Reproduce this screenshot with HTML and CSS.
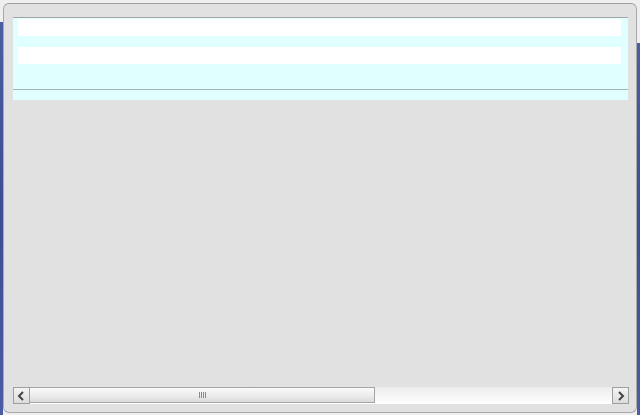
FILE: index.html
```html
<!DOCTYPE html>
<html>
<head>
<meta charset="utf-8">
<link rel="stylesheet" href="styles.css">
</head>
<body>
<div class="window">
  <div class="panel">
    <div class="field"></div>
    <div class="field field-second"></div>
    <div class="rule"></div>
  </div>
  <div class="body-space"></div>
  <div class="hscroll">
    <div class="sb-btn">
      <svg width="9" height="10" viewBox="0 0 9 10"><path d="M6 1 L2 5 L6 9" fill="none" stroke="#444" stroke-width="2"/></svg>
    </div>
    <div class="sb-track">
      <div class="sb-thumb">
        <span class="grip"></span>
      </div>
    </div>
    <div class="sb-btn">
      <svg width="9" height="10" viewBox="0 0 9 10"><path d="M3 1 L7 5 L3 9" fill="none" stroke="#444" stroke-width="2"/></svg>
    </div>
  </div>
</div>
</body>
</html>
```

FILE: styles.css
```css
html, body {
  margin: 0;
  padding: 0;
}

/* light page behind the dialog, with the blue side bars peeking out */
body {
  width: 640px;
  height: 415px;
  background:
    linear-gradient(180deg, #4b5da3, #3c4d92 50%, #4a5ca6) left 22px / 3px 393px no-repeat,
    linear-gradient(180deg, #4b5da3, #3c4d92 50%, #4a5ca6) right 43px / 3px 372px no-repeat,
    #efefef;
  overflow: hidden;
}

.window {
  box-sizing: border-box;
  margin: 3px 0 0 3px;
  width: 634px;
  height: 410px;
  background: #e1e1e1;
  border: 1px solid #a9a9a9;
  border-top-color: #a0a0a0;
  border-radius: 6px;
  padding: 13px 8px 8px 9px;
  display: flex;
  flex-direction: column;
}

.panel {
  border-top: 1px solid #a4a4a4;
  background: #e0ffff;
  padding: 1px 7px 0 5px;
  height: 83px;
  box-sizing: border-box;
  display: flex;
  flex-direction: column;
}

.field {
  height: 17px;
  background: #ffffff;
}

.field-second {
  margin-top: 11px;
}

.rule {
  margin: 25px -7px 0 -5px;
  height: 1px;
  background: #a8b4b4;
}

.body-space {
  flex: 1;
}

.hscroll {
  height: 17px;
  display: flex;
  margin-right: -1px;
}

.sb-btn {
  box-sizing: border-box;
  width: 17px;
  height: 17px;
  border: 1px solid #9e9e9e;
  background: linear-gradient(180deg, #f4f4f4, #dcdcdc);
  display: flex;
  align-items: center;
  justify-content: center;
}

.sb-track {
  flex: 1;
  background: linear-gradient(180deg, #ececec, #ffffff);
  display: flex;
}

.sb-thumb {
  box-sizing: border-box;
  width: 345px;
  height: 16px;
  border: 1px solid #a5a5a5;
  border-left: none;
  background: linear-gradient(180deg, #fafafa 0%, #ececec 55%, #dadada 100%);
  display: flex;
  align-items: center;
  justify-content: center;
}

.grip {
  width: 7px;
  height: 6px;
  background: repeating-linear-gradient(90deg, #8a8a8a 0 1px, transparent 1px 2px);
}
```
